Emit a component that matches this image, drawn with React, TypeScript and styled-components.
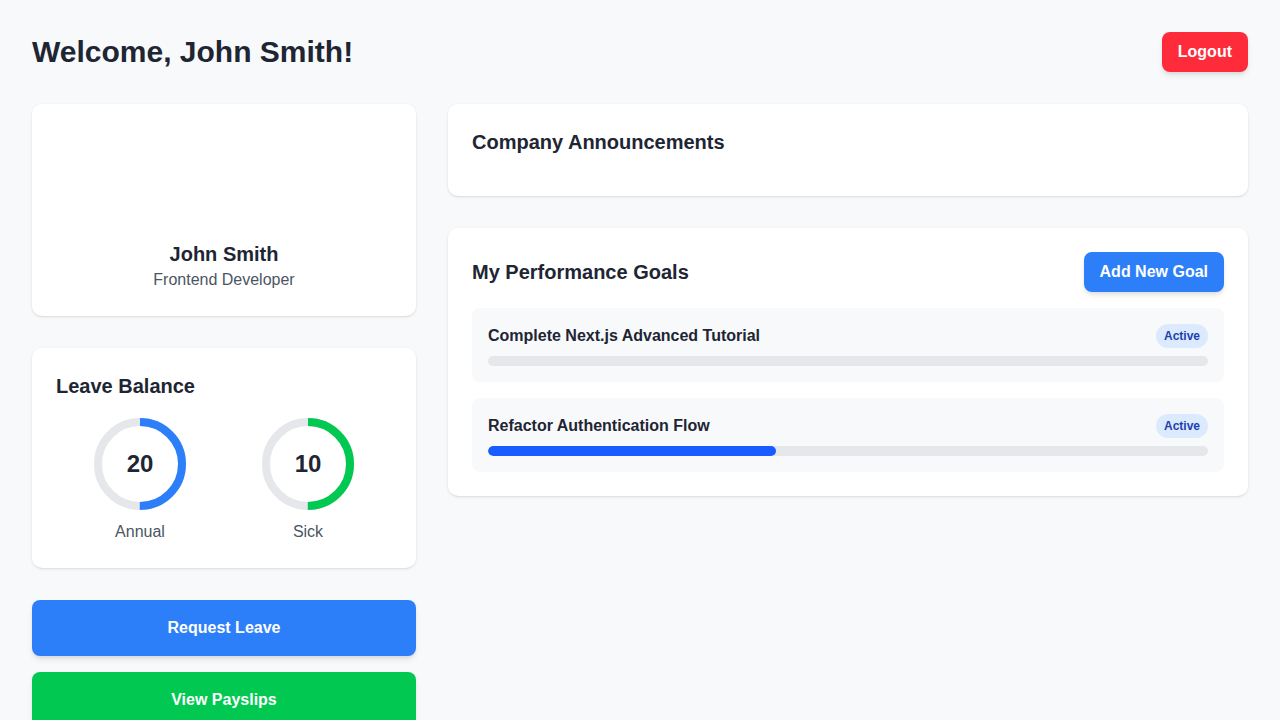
import React from "react";
import styled, { createGlobalStyle } from "styled-components";

const GlobalStyle = createGlobalStyle`
  * { box-sizing: border-box; }
  body {
    margin: 0;
    background: #f8f9fb;
    font-family: "Liberation Sans", Arial, sans-serif;
    color: #1f2937;
  }
`;

const Page = styled.div`
  padding: 32px;
  min-height: 100vh;
`;

const Header = styled.header`
  display: flex;
  align-items: center;
  justify-content: space-between;
  margin-bottom: 32px;
`;

const Title = styled.h1`
  margin: 0;
  font-size: 30px;
  line-height: 36px;
  font-weight: 700;
  color: #1e2533;
`;

const Button = styled.button<{ $color: string }>`
  border: none;
  border-radius: 8px;
  background: ${(p) => p.$color};
  color: #ffffff;
  font-family: inherit;
  font-size: 16px;
  line-height: 24px;
  font-weight: 700;
  padding: 8px 16px;
  box-shadow: 0 4px 6px -1px rgba(0, 0, 0, 0.1), 0 2px 4px -2px rgba(0, 0, 0, 0.1);
  cursor: pointer;
`;

const BigButton = styled(Button)`
  width: 100%;
  padding: 16px;
`;

const Grid = styled.div`
  display: grid;
  grid-template-columns: 384px 1fr;
  gap: 32px;
  align-items: start;
`;

const Column = styled.div<{ $gap: number }>`
  display: flex;
  flex-direction: column;
  gap: ${(p) => p.$gap}px;
`;

const Card = styled.section`
  background: #ffffff;
  border-radius: 10px;
  padding: 24px;
  box-shadow: 0 1px 3px rgba(0, 0, 0, 0.1), 0 1px 2px -1px rgba(0, 0, 0, 0.1);
`;

const Profile = styled(Card)`
  display: flex;
  flex-direction: column;
  align-items: center;
`;

const AvatarSlot = styled.div`
  width: 96px;
  height: 96px;
  margin-bottom: 16px;
`;

const Name = styled.h2`
  margin: 0;
  font-size: 20px;
  line-height: 28px;
  font-weight: 700;
  color: #1e2533;
`;

const Role = styled.p`
  margin: 0;
  font-size: 16px;
  line-height: 24px;
  color: #4b5563;
`;

const CardTitle = styled.h3<{ $mb?: number }>`
  margin: 0 0 ${(p) => p.$mb ?? 0}px;
  font-size: 20px;
  line-height: 28px;
  font-weight: 700;
  color: #1e2533;
`;

const LeaveGrid = styled.div`
  display: grid;
  grid-template-columns: 1fr 1fr;
`;

const LeaveItem = styled.div`
  display: flex;
  flex-direction: column;
  align-items: center;
  gap: 8px;
`;

const RingWrap = styled.div`
  position: relative;
  width: 96px;
  height: 96px;
`;

const RingValue = styled.span`
  position: absolute;
  inset: 0;
  display: flex;
  align-items: center;
  justify-content: center;
  font-size: 24px;
  font-weight: 700;
  color: #1e2533;
`;

const LeaveLabel = styled.span`
  font-size: 16px;
  line-height: 24px;
  color: #4b5563;
`;

const GoalsHeader = styled.div`
  display: flex;
  align-items: center;
  justify-content: space-between;
  margin-bottom: 16px;
`;

const GoalList = styled.div`
  display: flex;
  flex-direction: column;
  gap: 16px;
`;

const Goal = styled.div`
  background: #f8f9fb;
  border-radius: 8px;
  padding: 16px;
  display: flex;
  flex-direction: column;
  gap: 8px;
`;

const GoalRow = styled.div`
  display: flex;
  align-items: center;
  justify-content: space-between;
`;

const GoalName = styled.span`
  font-size: 16px;
  line-height: 24px;
  font-weight: 700;
  color: #1e2533;
`;

const Badge = styled.span`
  background: #dbeafe;
  color: #1e3fae;
  font-size: 12px;
  line-height: 16px;
  font-weight: 700;
  padding: 4px 8px;
  border-radius: 9999px;
`;

const Track = styled.div`
  height: 10px;
  border-radius: 9999px;
  background: #e5e7eb;
  overflow: hidden;
`;

const Fill = styled.div`
  height: 100%;
  border-radius: 9999px;
  background: #195cff;
`;

function Ring({ value, color }: { value: number; color: string }) {
  const r = 42;
  const c = 2 * Math.PI * r;
  return (
    <RingWrap>
      <svg width="96" height="96" viewBox="0 0 96 96">
        <circle cx="48" cy="48" r={r} fill="none" stroke="#e5e7eb" strokeWidth="8" />
        <circle
          cx="48"
          cy="48"
          r={r}
          fill="none"
          stroke={color}
          strokeWidth="8"
          strokeDasharray={`${c / 2} ${c}`}
          transform="rotate(-90 48 48)"
        />
      </svg>
      <RingValue>{value}</RingValue>
    </RingWrap>
  );
}

const goals = [
  { name: "Complete Next.js Advanced Tutorial", progress: 0 },
  { name: "Refactor Authentication Flow", progress: 40 },
];

export default function App() {
  return (
    <Page>
      <GlobalStyle />
      <Header>
        <Title>Welcome, John Smith!</Title>
        <Button $color="#fe2b3a">Logout</Button>
      </Header>
      <Grid>
        <Column $gap={32}>
          <Profile>
            <AvatarSlot />
            <Name>John Smith</Name>
            <Role>Frontend Developer</Role>
          </Profile>
          <Card>
            <CardTitle $mb={16}>Leave Balance</CardTitle>
            <LeaveGrid>
              <LeaveItem>
                <Ring value={20} color="#2d7ff9" />
                <LeaveLabel>Annual</LeaveLabel>
              </LeaveItem>
              <LeaveItem>
                <Ring value={10} color="#00c851" />
                <LeaveLabel>Sick</LeaveLabel>
              </LeaveItem>
            </LeaveGrid>
          </Card>
          <Column $gap={16}>
            <BigButton $color="#2d7ff9">Request Leave</BigButton>
            <BigButton $color="#00c851">View Payslips</BigButton>
          </Column>
        </Column>
        <Column $gap={32}>
          <Card>
            <CardTitle $mb={16}>Company Announcements</CardTitle>
          </Card>
          <Card>
            <GoalsHeader>
              <CardTitle>My Performance Goals</CardTitle>
              <Button $color="#2d7ff9">Add New Goal</Button>
            </GoalsHeader>
            <GoalList>
              {goals.map((g) => (
                <Goal key={g.name}>
                  <GoalRow>
                    <GoalName>{g.name}</GoalName>
                    <Badge>Active</Badge>
                  </GoalRow>
                  <Track>
                    <Fill style={{ width: `${g.progress}%` }} />
                  </Track>
                </Goal>
              ))}
            </GoalList>
          </Card>
        </Column>
      </Grid>
    </Page>
  );
}
